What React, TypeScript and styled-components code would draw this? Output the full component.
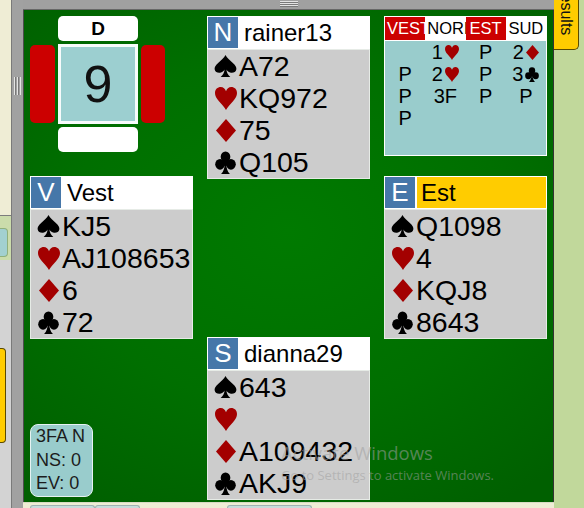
import React from "react";
import styled, { createGlobalStyle } from "styled-components";

const GlobalStyle = createGlobalStyle`
  html, body { margin: 0; padding: 0; }
  body {
    width: 584px; height: 508px; overflow: hidden;
    font-family: "Liberation Sans", Arial, sans-serif;
    background: #d4d4d4;
  }
  #root { width: 584px; height: 508px; }
`;

const Page = styled.div`
  position: relative;
  width: 584px;
  height: 508px;
  overflow: hidden;
  display: flex;
`;

/* ---------- left side panel ---------- */
const LeftPanel = styled.div`
  width: 11px;
  flex: none;
  display: flex;
  flex-direction: column;
  background: #d3d3d3;
`;
const LeftTop = styled.div`
  flex: none;
  height: 215px;
  background: #efedd5;
  border-bottom: 1px solid #7d7d7d;
`;
const LeftBand = styled.div`
  flex: none;
  height: 44px;
  background: #cbdcab;
  padding-top: 12px;
  box-sizing: border-box;
`;
const LeftTealTab = styled.div`
  width: 8px;
  height: 29px;
  box-sizing: border-box;
  background: #a2d0d0;
  border: 1px solid #8fb07c;
  border-left: none;
  border-radius: 0 4px 4px 0;
`;
const LeftYellowTab = styled.div`
  margin-top: 88px;
  width: 6px;
  height: 95px;
  box-sizing: border-box;
  background: #ffcc00;
  border: 1px solid #5a4a00;
  border-left: none;
  border-radius: 0 4px 4px 0;
`;

/* ---------- splitter ---------- */
const Splitter = styled.div`
  width: 12px;
  flex: none;
  box-sizing: border-box;
  background: #a1a1a1;
  border-left: 1px solid #7a7a7a;
  display: flex;
  flex-direction: column;
  align-items: center;
  padding-top: 77px;
`;
const VGrip = styled.div`
  width: 7px;
  height: 18px;
  background: repeating-linear-gradient(
    90deg,
    #e4e4e4 0 1px,
    #787878 1px 2px,
    transparent 2px 3px
  );
`;

/* ---------- center column ---------- */
const Center = styled.div`
  width: 531px;
  flex: none;
  display: flex;
  flex-direction: column;
`;
const TopBar = styled.div`
  flex: none;
  height: 9px;
  background: #a0a0a0;
  border-bottom: 1px solid #676767;
  display: flex;
  justify-content: center;
`;
const HGrip = styled.div`
  margin-top: 1px;
  width: 18px;
  height: 6px;
  background: repeating-linear-gradient(
    180deg,
    #e4e4e4 0 1px,
    #7a7a7a 1px 2px
  );
`;
const Board = styled.div`
  flex: 1;
  box-sizing: border-box;
  border-left: 1px solid #4d4d4d;
  border-right: 1px solid #333;
  background: radial-gradient(
    ellipse 75% 65% at 50% 45%,
    #007a00 0%,
    #006f00 55%,
    #006000 100%
  );
  display: grid;
  grid-template-columns: 163px 163px 163px;
  column-gap: 14px;
  grid-template-rows: 160px 161px 1fr;
  padding: 6px 0 0 6px;
`;
const BottomStrip = styled.div`
  flex: none;
  height: 6px;
  box-sizing: border-box;
  background: #efedd5;
  border-top: 1px solid #d9d9c4;
  display: flex;
  align-items: flex-end;
  padding-left: 7px;
`;
const BottomTab = styled.div<{ $w: number; $gap?: number }>`
  width: ${(p) => p.$w}px;
  margin-left: ${(p) => p.$gap ?? 0}px;
  height: 3px;
  box-sizing: border-box;
  background: #c9dcdc;
  border: 1px solid #9fb3b3;
  border-bottom: none;
  border-radius: 3px 3px 0 0;
`;

/* ---------- right panel ---------- */
const RightPanel = styled.div`
  width: 30px;
  flex: none;
  background: #c1d89b;
  overflow: hidden;
`;
const ResultsTab = styled.div`
  margin-top: -20px;
  width: 25px;
  height: 70px;
  box-sizing: border-box;
  background: #ffcc00;
  border: 1px solid #5a4a00;
  border-top: none;
  border-left: none;
  border-radius: 0 0 5px 0;
  display: flex;
  justify-content: center;
  padding-top: 2px;
`;
const ResultsText = styled.span`
  writing-mode: vertical-rl;
  font-size: 16px;
  color: #111;
`;

/* ---------- suits ---------- */
type SuitKind = "s" | "h" | "d" | "c";
const SuitSvg = styled.svg<{ $red: boolean }>`
  display: block;
  flex: none;
  fill: ${(p) => (p.$red ? "#a30000" : "#000")};
`;
function Suit({ kind, w, h }: { kind: SuitKind; w: number; h: number }) {
  const red = kind === "h" || kind === "d";
  return (
    <SuitSvg
      $red={red}
      width={w}
      height={h}
      viewBox="0 0 100 100"
      preserveAspectRatio="none"
    >
      {kind === "s" && (
        <path d="M50 0 C45 12 30 24 18 36 C6 48 1 56 3 66 C5 78 18 84 30 80 C38 77 43 72 46 66 C45 78 40 90 29 100 L71 100 C60 90 55 78 54 66 C57 72 62 77 70 80 C82 84 95 78 97 66 C99 56 94 48 82 36 C70 24 55 12 50 0 Z" />
      )}
      {kind === "h" && (
        <path d="M50 100 C44 88 30 76 18 62 C6 48 0 38 0 26 C0 10 12 0 26 0 C38 0 46 8 50 18 C54 8 62 0 74 0 C88 0 100 10 100 26 C100 38 94 48 82 62 C70 76 56 88 50 100 Z" />
      )}
      {kind === "d" && <path d="M50 0 L100 50 L50 100 L0 50 Z" />}
      {kind === "c" && (
        <>
          <circle cx="50" cy="25" r="23" />
          <circle cx="24" cy="58" r="23" />
          <circle cx="76" cy="58" r="23" />
          <circle cx="50" cy="52" r="13" />
          <path d="M46 55 C46 75 41 88 29 100 L71 100 C59 88 54 75 54 55 Z" />
        </>
      )}
    </SuitSvg>
  );
}

const handSuitSize: Record<SuitKind, [number, number]> = {
  s: [23, 22],
  h: [22, 23],
  d: [20, 23],
  c: [21, 23],
};

/* ---------- dealer block ---------- */
const Dealer = styled.div`
  grid-column: 1;
  grid-row: 1;
  align-self: start;
  display: grid;
  grid-template-columns: 25px 80px 24px;
  grid-template-rows: 25px 80px 25px;
  column-gap: 3px;
  row-gap: 3px;
`;
const DealerTag = styled.div<{ $row: number }>`
  grid-column: 2;
  grid-row: ${(p) => p.$row};
  background: #fff;
  border-radius: 5px;
  display: flex;
  align-items: center;
  justify-content: center;
  font-weight: bold;
  font-size: 19px;
  color: #000;
`;
const RedBar = styled.div<{ $col: number }>`
  grid-column: ${(p) => p.$col};
  grid-row: 2;
  margin: 1px 0;
  background: #cc0000;
  border-radius: 5px;
`;
const BoardNumber = styled.div`
  grid-column: 2;
  grid-row: 2;
  box-sizing: border-box;
  background: #9ccfd0;
  border: 3px solid #f7fbfb;
  display: flex;
  align-items: center;
  justify-content: center;
  font-size: 52px;
  color: #111;
`;

/* ---------- hands ---------- */
const HandBox = styled.div<{ $col: number; $row: number }>`
  grid-column: ${(p) => p.$col};
  grid-row: ${(p) => p.$row};
  align-self: start;
  width: 163px;
  display: flex;
  flex-direction: column;
`;
const HandHeader = styled.div`
  flex: none;
  height: 33px;
  box-sizing: border-box;
  padding: 1px;
  background: #fff;
  display: flex;
  gap: 2px;
`;
const SeatLetter = styled.div`
  width: 30px;
  flex: none;
  background: #4677a9;
  color: #fff;
  font-size: 26px;
  display: flex;
  align-items: center;
  justify-content: center;
`;
const PlayerName = styled.div<{ $active?: boolean }>`
  flex: 1;
  background: ${(p) => (p.$active ? "#ffcc00" : "#fff")};
  color: #000;
  font-size: 24px;
  display: flex;
  align-items: center;
  padding-left: 4px;
`;
const HandBody = styled.div`
  box-sizing: border-box;
  height: 130px;
  background: #cccccc;
  border: 1px solid #e6ebe6;
  padding: 0 0 0 4px;
`;
const SuitLine = styled.div`
  height: 32px;
  display: flex;
  align-items: center;
  font-size: 28.5px;
  line-height: 32px;
  color: #000;
  white-space: nowrap;
`;
const SuitSlot = styled.span`
  width: 27px;
  flex: none;
  display: flex;
  justify-content: center;
`;

type HandData = {
  seat: string;
  name: string;
  active?: boolean;
  cards: Record<SuitKind, string>;
  col: number;
  row: number;
};

function Hand({ seat, name, active, cards, col, row }: HandData) {
  const order: SuitKind[] = ["s", "h", "d", "c"];
  return (
    <HandBox $col={col} $row={row}>
      <HandHeader>
        <SeatLetter>{seat}</SeatLetter>
        <PlayerName $active={active}>{name}</PlayerName>
      </HandHeader>
      <HandBody>
        {order.map((k) => (
          <SuitLine key={k}>
            <SuitSlot>
              <Suit kind={k} w={handSuitSize[k][0]} h={handSuitSize[k][1]} />
            </SuitSlot>
            {cards[k]}
          </SuitLine>
        ))}
      </HandBody>
    </HandBox>
  );
}

/* ---------- bidding ---------- */
const Bidding = styled.div`
  grid-column: 3;
  grid-row: 1;
  align-self: start;
  width: 163px;
  height: 140px;
  display: flex;
  flex-direction: column;
`;
const BidHead = styled.div`
  flex: none;
  height: 24px;
  box-sizing: border-box;
  padding: 1px 1px 0 1px;
  background: #fff;
  display: grid;
  grid-template-columns: repeat(4, 1fr);
`;
const BidHeadCell = styled.div<{ $red?: boolean }>`
  background: ${(p) => (p.$red ? "#cc0000" : "#fff")};
  color: ${(p) => (p.$red ? "#fff" : "#000")};
  font-size: 16.5px;
  line-height: 23px;
  text-align: center;
  white-space: nowrap;
  overflow: hidden;
  padding: 0 2px;
`;
const BidBody = styled.div`
  flex: 1;
  box-sizing: border-box;
  background: #99cccc;
  border: 1px solid #fff;
  display: grid;
  grid-template-columns: repeat(4, 1fr);
  grid-auto-rows: 22px;
  align-content: start;
`;
const Bid = styled.div`
  display: flex;
  align-items: center;
  justify-content: center;
  gap: 2px;
  font-size: 20px;
  color: #000;
`;

type BidData = { text: string; suit?: SuitKind };
const bids: BidData[] = [
  { text: "" },
  { text: "1", suit: "h" },
  { text: "P" },
  { text: "2", suit: "d" },
  { text: "P" },
  { text: "2", suit: "h" },
  { text: "P" },
  { text: "3", suit: "c" },
  { text: "P" },
  { text: "3F" },
  { text: "P" },
  { text: "P" },
  { text: "P" },
];
const bidSuitSize: Record<SuitKind, [number, number]> = {
  s: [14, 15],
  h: [14, 15],
  d: [13, 15],
  c: [14, 15],
};

/* ---------- contract ---------- */
const Contract = styled.div`
  grid-column: 1;
  grid-row: 3;
  align-self: end;
  margin-bottom: 5px;
  width: 63px;
  height: 73px;
  box-sizing: border-box;
  background: #99cccc;
  border: 1px solid #e6f2f2;
  border-radius: 8px;
  padding-left: 5px;
  font-size: 18px;
  line-height: 23.5px;
  color: #1c1c1c;
  white-space: nowrap;
`;

/* ---------- watermark overlay ---------- */
const Watermark = styled.div`
  position: absolute;
  left: 281px;
  top: 441px;
  pointer-events: none;
  color: rgba(160, 160, 160, 0.55);
  font-family: "Open Sans", "Noto Sans", sans-serif;
  white-space: nowrap;
`;
const WmTitle = styled.div`
  font-size: 18.5px;
  line-height: 24px;
`;
const WmSub = styled.div`
  font-size: 13px;
  line-height: 20px;
`;

const hands: HandData[] = [
  {
    seat: "N",
    name: "rainer13",
    cards: { s: "A72", h: "KQ972", d: "75", c: "Q105" },
    col: 2,
    row: 1,
  },
  {
    seat: "V",
    name: "Vest",
    cards: { s: "KJ5", h: "AJ108653", d: "6", c: "72" },
    col: 1,
    row: 2,
  },
  {
    seat: "E",
    name: "Est",
    active: true,
    cards: { s: "Q1098", h: "4", d: "KQJ8", c: "8643" },
    col: 3,
    row: 2,
  },
  {
    seat: "S",
    name: "dianna29",
    cards: { s: "643", h: "", d: "A109432", c: "AKJ9" },
    col: 2,
    row: 3,
  },
];

export default function App() {
  return (
    <>
      <GlobalStyle />
      <Page>
        <LeftPanel>
          <LeftTop />
          <LeftBand>
            <LeftTealTab />
          </LeftBand>
          <LeftYellowTab />
        </LeftPanel>
        <Splitter>
          <VGrip />
        </Splitter>
        <Center>
          <TopBar>
            <HGrip />
          </TopBar>
          <Board>
            <Dealer>
              <DealerTag $row={1}>D</DealerTag>
              <RedBar $col={1} />
              <BoardNumber>9</BoardNumber>
              <RedBar $col={3} />
              <DealerTag $row={3} />
            </Dealer>
            {hands.map((h) => (
              <Hand key={h.seat} {...h} />
            ))}
            <Bidding>
              <BidHead>
                <BidHeadCell $red>VEST</BidHeadCell>
                <BidHeadCell>NORD</BidHeadCell>
                <BidHeadCell $red>EST</BidHeadCell>
                <BidHeadCell>SUD</BidHeadCell>
              </BidHead>
              <BidBody>
                {bids.map((b, i) => (
                  <Bid key={i}>
                    {b.text}
                    {b.suit && (
                      <Suit
                        kind={b.suit}
                        w={bidSuitSize[b.suit][0]}
                        h={bidSuitSize[b.suit][1]}
                      />
                    )}
                  </Bid>
                ))}
              </BidBody>
            </Bidding>
            <Contract>
              <div>3FA N</div>
              <div>NS: 0</div>
              <div>EV: 0</div>
            </Contract>
          </Board>
          <BottomStrip>
            <BottomTab $w={65} />
            <BottomTab $w={45} />
            <BottomTab $w={85} $gap={87} />
          </BottomStrip>
        </Center>
        <RightPanel>
          <ResultsTab>
            <ResultsText>Results</ResultsText>
          </ResultsTab>
        </RightPanel>
        <Watermark>
          <WmTitle>Activate Windows</WmTitle>
          <WmSub>Go to Settings to activate Windows.</WmSub>
        </Watermark>
      </Page>
    </>
  );
}
